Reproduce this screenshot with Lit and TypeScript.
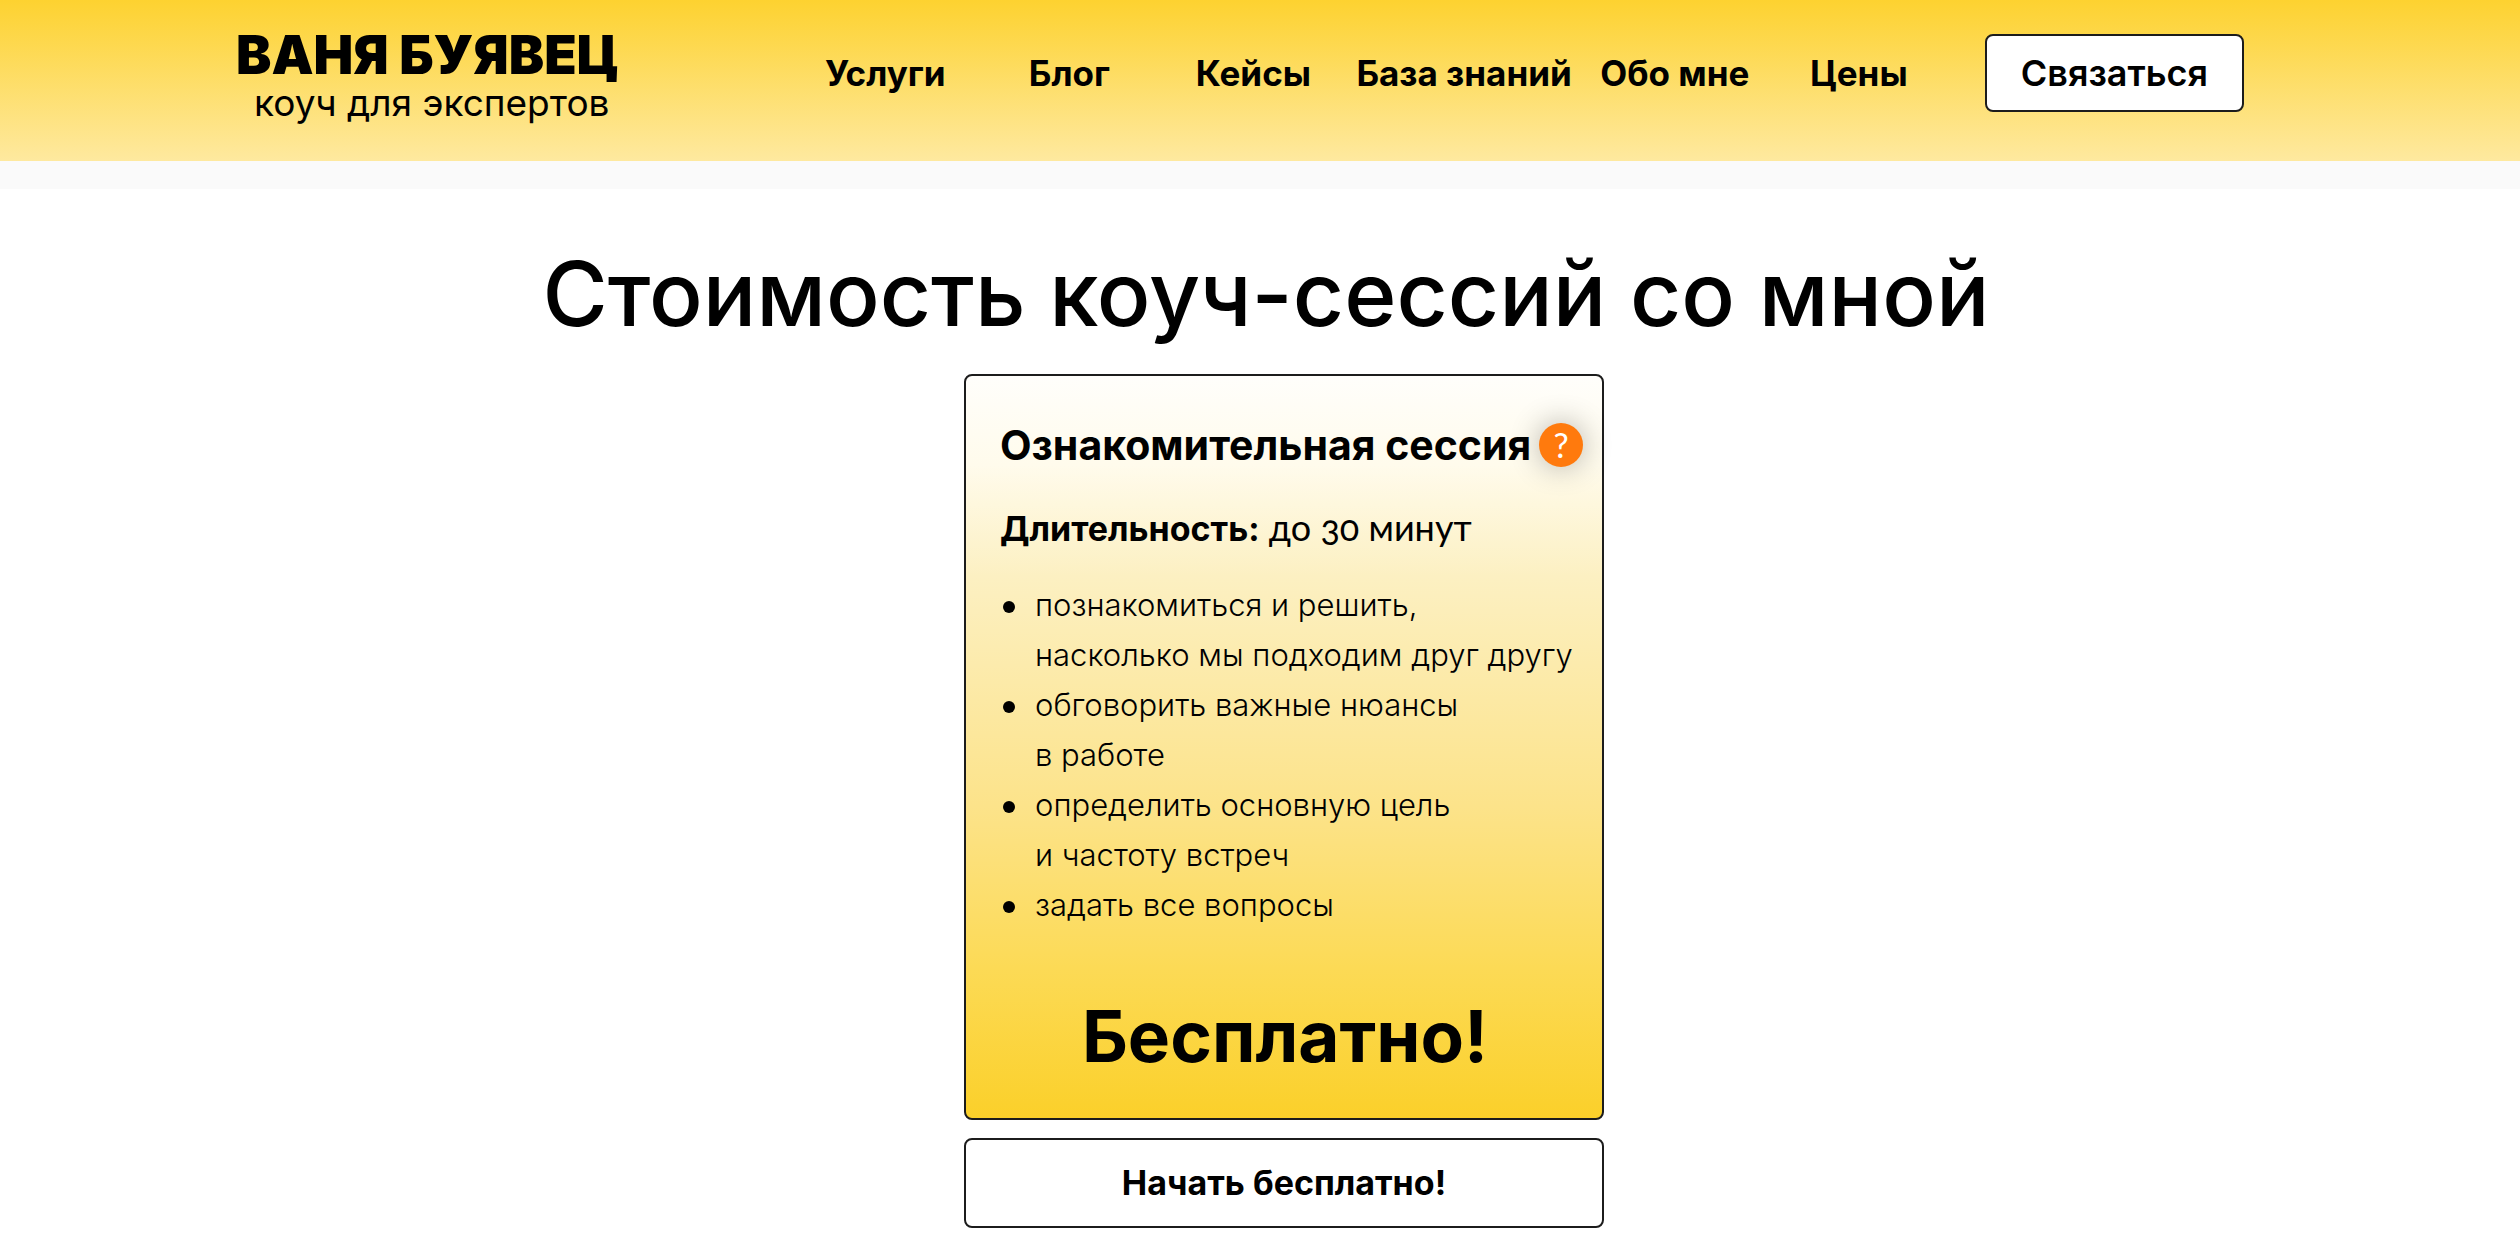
import { LitElement, html, css } from "lit";
import { customElement } from "lit/decorators.js";

const NAV_ITEMS = ["Услуги", "Блог", "Кейсы", "База знаний", "Обо мне", "Цены"];

const SESSION_POINTS: string[][] = [
  ["познакомиться и решить,", "насколько мы подходим друг другу"],
  ["обговорить важные нюансы", "в работе"],
  ["определить основную цель", "и частоту встреч"],
  ["задать все вопросы"],
];

@customElement("site-header")
export class SiteHeader extends LitElement {
  static styles = css`
    :host {
      display: block;
      border-bottom: 28px solid #fafafa;
    }
    .bar {
      display: flex;
      align-items: flex-start;
      gap: 34px;
      box-sizing: border-box;
      min-height: 161px;
      padding: 27px 276px 26px 236px;
      background: linear-gradient(#fdd230, #fee99f);
    }
    .logo {
      margin-right: auto;
      color: #000;
      text-decoration: none;
      white-space: nowrap;
    }
    .name {
      display: block;
      font: 900 53px/56px Inter, sans-serif;
    }
    .tagline {
      display: block;
      padding-left: 18px;
      font: 400 37px/40px Inter, sans-serif;
    }
    nav {
      display: flex;
      margin-top: 7px;
    }
    nav a {
      box-sizing: border-box;
      min-width: 184px;
      padding: 0 11px;
      color: #000;
      font: 700 35px/78px Inter, sans-serif;
      text-align: center;
      text-decoration: none;
      white-space: nowrap;
    }
    .contact {
      box-sizing: border-box;
      margin-top: 7px;
      height: 78px;
      padding: 0 34px;
      border: 2px solid #1c1c1c;
      border-radius: 8px;
      background: #fff;
      color: #000;
      font: 600 36px/44px Inter, sans-serif;
      white-space: nowrap;
      cursor: pointer;
    }
  `;

  render() {
    return html`
      <header class="bar">
        <a class="logo" href="#">
          <span class="name">ВАНЯ БУЯВЕЦ</span>
          <span class="tagline">коуч для экспертов</span>
        </a>
        <nav>${NAV_ITEMS.map((item) => html`<a href="#">${item}</a>`)}</nav>
        <button class="contact" type="button">Связаться</button>
      </header>
    `;
  }
}

@customElement("session-card")
export class SessionCard extends LitElement {
  static styles = css`
    :host {
      display: flex;
      flex-direction: column;
      gap: 18px;
      color: #000;
    }
    .card {
      padding: 44px 17px 39px 34px;
      border: 2px solid #1c1c1c;
      border-radius: 8px;
      background: linear-gradient(#fffefb, #fffbec 12%, #fcf0c2 27%, #fce38a 58%, #fcda55 80%, #fbd02a);
    }
    .heading {
      display: flex;
      align-items: center;
      gap: 8px;
    }
    h2 {
      margin: 0;
      font: 700 41px/50px Inter, sans-serif;
      white-space: nowrap;
    }
    .help {
      flex: none;
      width: 44px;
      height: 44px;
      padding: 0;
      border: 0;
      border-radius: 50%;
      background: #ff7a0d;
      box-shadow: 0 0 30px rgba(0, 0, 0, 0.3);
      color: #fff;
      font: 400 34px/44px Lato, sans-serif;
      cursor: pointer;
    }
    .duration {
      margin: 32px 0 26px;
      font: 400 36px/50px Lato, sans-serif;
      font-variant-numeric: oldstyle-nums;
    }
    .duration strong {
      font: 700 34px/50px Inter, sans-serif;
    }
    ul {
      margin: 0 0 63px;
      padding: 0;
      list-style: none;
      font: 300 31px/50px Inter, sans-serif;
    }
    li {
      display: flex;
      gap: 20px;
      padding-left: 3px;
    }
    li::before {
      content: "";
      flex: none;
      width: 12px;
      height: 12px;
      margin-top: 21px;
      border-radius: 50%;
      background: #000;
    }
    .line {
      display: block;
      white-space: nowrap;
    }
    .price {
      margin: 0;
      padding-right: 15px;
      font: 700 71px/86px Inter, sans-serif;
      text-align: center;
    }
    .start {
      height: 90px;
      border: 2px solid #1c1c1c;
      border-radius: 8px;
      background: #fff;
      color: #000;
      font: 700 34px/44px Inter, sans-serif;
      cursor: pointer;
    }
  `;

  render() {
    return html`
      <article class="card">
        <div class="heading">
          <h2>Ознакомительная сессия</h2>
          <button class="help" type="button">?</button>
        </div>
        <p class="duration"><strong>Длительность:</strong> до 30 минут</p>
        <ul>
          ${SESSION_POINTS.map(
            (lines) => html`<li><div>${lines.map((line) => html`<span class="line">${line}</span>`)}</div></li>`
          )}
        </ul>
        <p class="price">Бесплатно!</p>
      </article>
      <button class="start" type="button">Начать бесплатно!</button>
    `;
  }
}

@customElement("app-root")
export class AppRoot extends LitElement {
  static styles = css`
    :host {
      display: block;
      min-height: 100vh;
      background: #fff;
      color: #000;
    }
    main {
      display: flex;
      flex-direction: column;
      align-items: center;
      gap: 26px;
      padding: 51px 0 24px 12px;
    }
    h1 {
      margin: 0;
      font: 500 89px/108px Inter, sans-serif;
      text-align: center;
    }
    .offer {
      width: 640px;
      max-width: 100%;
      padding-left: 36px;
    }
  `;

  render() {
    return html`
      <site-header></site-header>
      <main>
        <h1>Стоимость коуч-сессий со мной</h1>
        <session-card class="offer"></session-card>
      </main>
    `;
  }
}
